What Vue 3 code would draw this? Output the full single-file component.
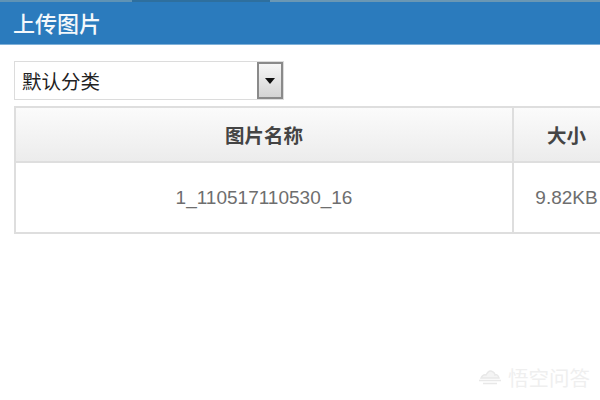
<script setup>
const title = '上传图片'
const category = '默认分类'
const headers = ['图片名称', '大小']
const row = ['1_110517110530_16', '9.82KB']
</script>

<template>
  <div class="page">
    <header class="bar">
      <div class="strip"></div>
      <h1 class="title">{{ title }}</h1>
    </header>
    <div class="picker">
      <span class="value">{{ category }}</span>
      <span class="arrow-btn"><i class="arrow"></i></span>
    </div>
    <div class="table">
      <div class="cell head name">{{ headers[0] }}</div>
      <div class="cell head">{{ headers[1] }}</div>
      <div class="cell data name">{{ row[0] }}</div>
      <div class="cell data">{{ row[1] }}</div>
    </div>
    <div class="mark">
      <svg class="cloud" width="24" height="16" viewBox="0 0 24 16" fill="#f4f4f4" stroke="#e8e8e8" stroke-width="1.4">
        <path d="M3 9 Q5 5 8 6 Q11 0 15 3 Q17 4 17 6 Q20 5 21 9 Z" />
        <path d="M1 11.500 H23 M5 14.500 H19" fill="none" />
      </svg>
      <span>悟空问答</span>
    </div>
  </div>
</template>

<style>
html, body { margin: 0; background: #fff; }
</style>

<style scoped>
.page {
  position: relative;
  width: 600px;
  height: 400px;
  overflow: hidden;
  background: #fff;
  font-family: "Liberation Sans", "Noto Sans CJK SC", sans-serif;
}
.bar {
  height: 45px;
  box-sizing: border-box;
  background: #2b7bbd;
  border-bottom: 1px solid #7fb0d8;
}
.strip {
  height: 2px;
  background: linear-gradient(90deg, #5f93b5 0 22%, #2e6f9e 22% 45%, #6a97b4 45% 100%);
}
.title {
  margin: 0;
  padding: 8px 0 0 13px;
  font-size: 22px;
  line-height: 29px;
  font-weight: 500;
  color: #f4f8fb;
}
.picker {
  display: flex;
  align-items: center;
  justify-content: space-between;
  box-sizing: border-box;
  width: 270px;
  height: 39px;
  margin: 16px 0 0 14px;
  padding: 0 0 0 7px;
  border: 1px solid #dcdcdc;
}
.value {
  font-size: 19.500px;
  color: #222;
}
.arrow-btn {
  display: flex;
  align-items: center;
  justify-content: center;
  box-sizing: border-box;
  width: 26px;
  height: 37px;
  border: 2px solid #8a8a8a;
  background: linear-gradient(#f6f6f6, #d4d4d4);
}
.arrow {
  width: 0;
  height: 0;
  border-left: 5px solid transparent;
  border-right: 5px solid transparent;
  border-top: 6px solid #111;
}
.table {
  display: grid;
  grid-template-columns: 498px 105px;
  grid-template-rows: 55px 69px;
  width: 610px;
  margin: 6px 0 0 14px;
  border: 1px solid #dedede;
  border-width: 2px 0 2px 2px;
  box-sizing: border-box;
}
.cell {
  display: flex;
  align-items: center;
  justify-content: center;
  box-sizing: border-box;
}
.head {
  background: linear-gradient(#fbfbfb, #ececec);
  border-bottom: 2px solid #dedede;
  font-size: 19.500px;
  font-weight: 700;
  color: #444;
}
.data {
  font-size: 19px;
  color: #6e6e6e;
}
.name { border-right: 2px solid #dedede; }
.mark {
  position: absolute;
  right: 10px;
  bottom: 8px;
  display: flex;
  align-items: center;
  gap: 6px;
  font-size: 20.500px;
  color: #efefef;
}
</style>
